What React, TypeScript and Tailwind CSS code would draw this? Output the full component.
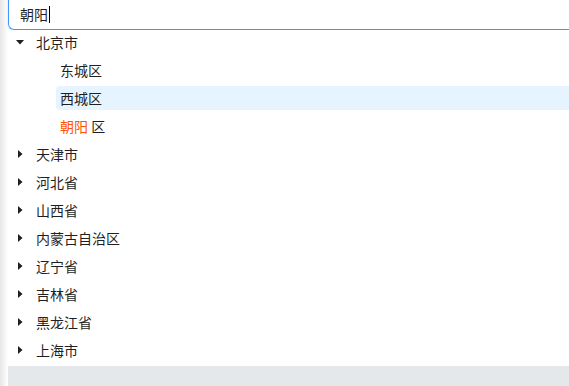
import React from "react";

const font = { fontFamily: '"Noto Sans CJK SC", "Noto Sans", sans-serif' };

function CaretDown() {
  return (
    <svg width="8" height="5" viewBox="0 0 8 5" className="block">
      <polygon points="0,0 8,0 4,4.5" fill="#1f1f1f" />
    </svg>
  );
}

function CaretRight() {
  return (
    <svg width="5" height="8" viewBox="0 0 5 8" className="block">
      <polygon points="0,0 4.5,4 0,8" fill="#1f1f1f" />
    </svg>
  );
}

function TopRow({ label, open }: { label: string; open?: boolean }) {
  return (
    <div className="flex h-6 items-center">
      <div className="flex h-6 w-6 shrink-0 items-center justify-center">
        {open ? <CaretDown /> : <CaretRight />}
      </div>
      <div className="flex h-6 items-center px-1 text-[14px] text-[#1f1f1f]">{label}</div>
    </div>
  );
}

function LeafRow({ children, active }: { children: React.ReactNode; active?: boolean }) {
  return (
    <div className="flex h-6 items-center">
      <div className="w-12 shrink-0" />
      <div
        className={
          active
            ? "flex h-6 flex-1 items-center rounded-l bg-[#e6f4ff] px-1 text-[14px] text-[#1f1f1f]"
            : "flex h-6 flex-1 items-center px-1 text-[14px] text-[#1f1f1f]"
        }
      >
        {children}
      </div>
    </div>
  );
}

export default function App() {
  const provinces = ["天津市", "河北省", "山西省", "内蒙古自治区", "辽宁省", "吉林省", "黑龙江省", "上海市"];
  return (
    <div className="flex h-[386px] w-[569px] overflow-hidden bg-white" style={font}>
      <div className="w-2 shrink-0 bg-gradient-to-r from-[#e6e6e6] to-white" />
      <div className="flex min-w-0 flex-1 flex-col">
        <div className="flex h-[30px] shrink-0 items-center rounded-bl-[6px] border-b border-l border-[#4096ff] pl-[11px] shadow-[0_1px_0_1px_rgba(5,145,255,0.08)]">
          <span className="text-[14px] text-[#1f1f1f]">朝阳</span>
          <span className="ml-[1px] h-[17px] w-px bg-black" />
        </div>
        <div className="flex flex-col gap-1 bg-white pb-1">
          <TopRow label="北京市" open />
          <LeafRow>东城区</LeafRow>
          <LeafRow active>西城区</LeafRow>
          <LeafRow>
            <span className="text-[#ff5500]">朝阳</span>
            <span>&nbsp;区</span>
          </LeafRow>
          {provinces.map((p) => (
            <TopRow key={p} label={p} />
          ))}
        </div>
        <div className="flex-1 bg-[#e5e8eb]" />
      </div>
    </div>
  );
}
